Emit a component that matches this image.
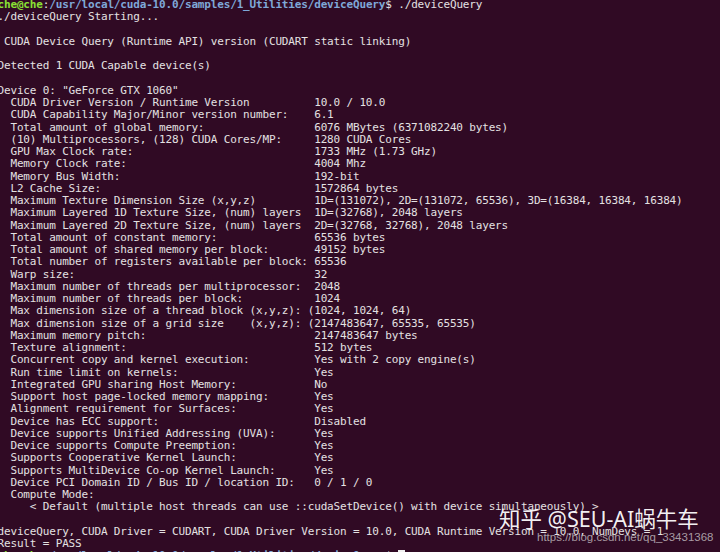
const COL = 49

const kv = (label: string, value: string) => ('  ' + label).padEnd(COL, ' ') + value

const body: string[] = [
  './deviceQuery Starting...',
  '',
  ' CUDA Device Query (Runtime API) version (CUDART static linking)',
  '',
  'Detected 1 CUDA Capable device(s)',
  '',
  'Device 0: "GeForce GTX 1060"',
  kv('CUDA Driver Version / Runtime Version', '10.0 / 10.0'),
  kv('CUDA Capability Major/Minor version number:', '6.1'),
  kv('Total amount of global memory:', '6076 MBytes (6371082240 bytes)'),
  kv('(10) Multiprocessors, (128) CUDA Cores/MP:', '1280 CUDA Cores'),
  kv('GPU Max Clock rate:', '1733 MHz (1.73 GHz)'),
  kv('Memory Clock rate:', '4004 Mhz'),
  kv('Memory Bus Width:', '192-bit'),
  kv('L2 Cache Size:', '1572864 bytes'),
  kv('Maximum Texture Dimension Size (x,y,z)', '1D=(131072), 2D=(131072, 65536), 3D=(16384, 16384, 16384)'),
  kv('Maximum Layered 1D Texture Size, (num) layers', '1D=(32768), 2048 layers'),
  kv('Maximum Layered 2D Texture Size, (num) layers', '2D=(32768, 32768), 2048 layers'),
  kv('Total amount of constant memory:', '65536 bytes'),
  kv('Total amount of shared memory per block:', '49152 bytes'),
  kv('Total number of registers available per block:', '65536'),
  kv('Warp size:', '32'),
  kv('Maximum number of threads per multiprocessor:', '2048'),
  kv('Maximum number of threads per block:', '1024'),
  '  Max dimension size of a thread block (x,y,z): (1024, 1024, 64)',
  '  Max dimension size of a grid size    (x,y,z): (2147483647, 65535, 65535)',
  kv('Maximum memory pitch:', '2147483647 bytes'),
  kv('Texture alignment:', '512 bytes'),
  kv('Concurrent copy and kernel execution:', 'Yes with 2 copy engine(s)'),
  kv('Run time limit on kernels:', 'Yes'),
  kv('Integrated GPU sharing Host Memory:', 'No'),
  kv('Support host page-locked memory mapping:', 'Yes'),
  kv('Alignment requirement for Surfaces:', 'Yes'),
  kv('Device has ECC support:', 'Disabled'),
  kv('Device supports Unified Addressing (UVA):', 'Yes'),
  kv('Device supports Compute Preemption:', 'Yes'),
  kv('Supports Cooperative Kernel Launch:', 'Yes'),
  kv('Supports MultiDevice Co-op Kernel Launch:', 'Yes'),
  kv('Device PCI Domain ID / Bus ID / location ID:', '0 / 1 / 0'),
  '  Compute Mode:',
  '     < Default (multiple host threads can use ::cudaSetDevice() with device simultaneously) >',
  '',
  'deviceQuery, CUDA Driver = CUDART, CUDA Driver Version = 10.0, CUDA Runtime Version = 10.0, NumDevs = 1',
  'Result = PASS',
]

function Prompt({ cmd, cursor }: { cmd?: string; cursor?: boolean }) {
  return (
    <div className="h-[12.25px]">
      <span className="font-bold text-[#8ae234]">che@che</span>
      <span className="text-[#e4e1e2]">:</span>
      <span className="font-bold text-[#7fa8d8]">/usr/local/cuda-10.0/samples/1_Utilities/deviceQuery</span>
      <span className="text-[#e4e1e2]">$ </span>
      {cmd && <span>{cmd}</span>}
      {cursor && <span className="inline-block h-[12px] w-[6.5px] align-top bg-[#f0f0f0]" />}
    </div>
  )
}

export default function App() {
  return (
    <div className="relative h-[552px] w-[720px] overflow-hidden bg-[#300a24]">
      <div
        className="-ml-[2.5px] -mt-[1px] whitespace-pre text-[11px] leading-[12.25px] tracking-[-0.16px] text-[#e4e1e2]"
        style={{ fontFamily: '"DejaVu Sans Mono", "Liberation Mono", monospace' }}
      >
        <Prompt cmd="./deviceQuery" />
        {body.map((line, i) => (
          <div key={i} className="h-[12.25px]">
            {line}
          </div>
        ))}
        <Prompt cursor />
      </div>

      {/* watermarks */}
      <div
        className="absolute left-[499px] top-[508px] whitespace-nowrap text-[21.5px] leading-none text-white/95"
        style={{ fontFamily: '"Noto Sans", "Noto Sans CJK SC", sans-serif' }}
      >
        知乎 @SEU-AI蜗牛车
      </div>
      <div
        className="absolute left-[537px] top-[532px] whitespace-nowrap text-[11.5px] leading-none text-[#c8c3c6]/80"
        style={{ fontFamily: '"Liberation Sans", Arial, sans-serif' }}
      >
        https://blog.csdn.net/qq_33431368
      </div>
    </div>
  )
}
